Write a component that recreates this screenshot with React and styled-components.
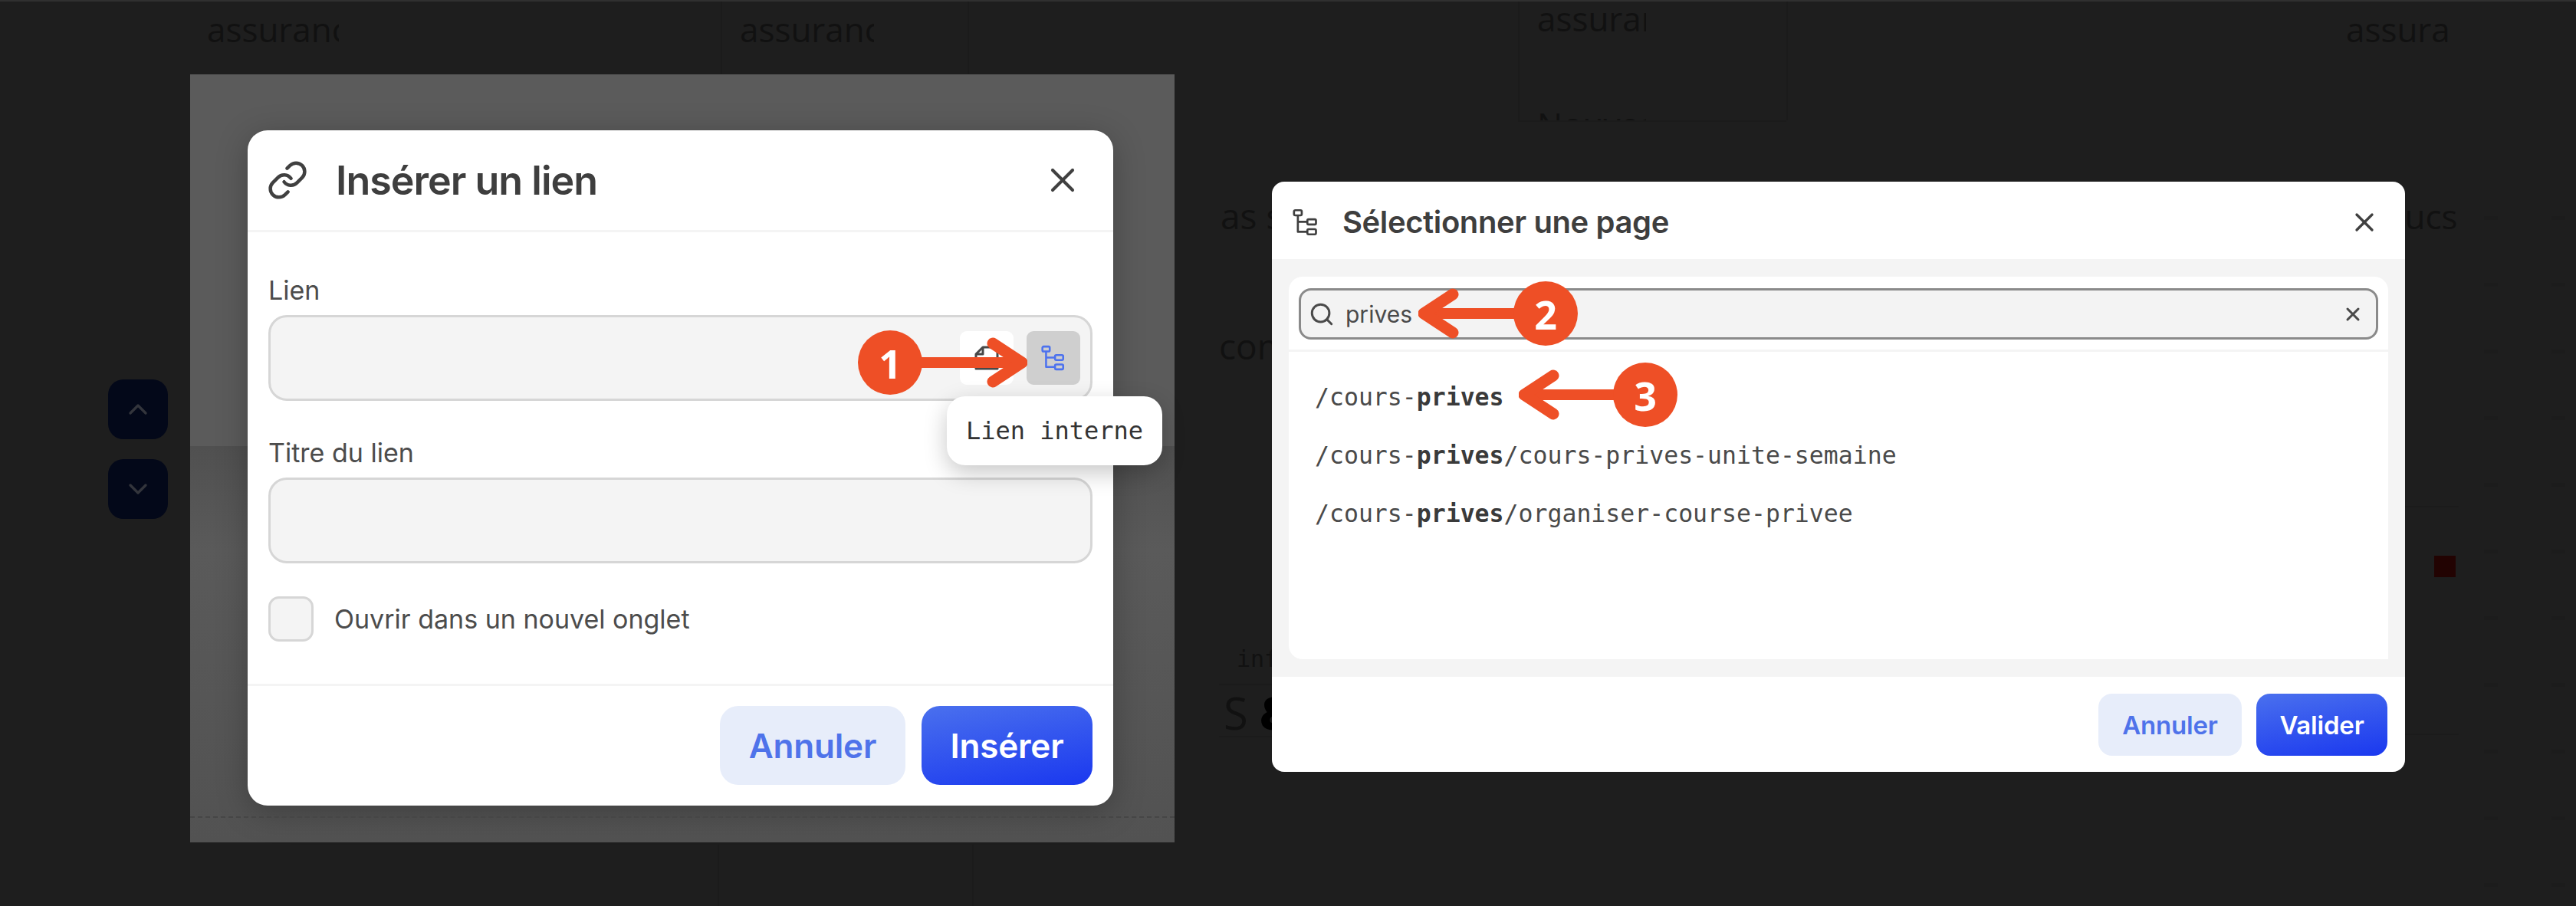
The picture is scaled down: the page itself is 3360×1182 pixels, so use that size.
import { Search, X, ChevronUp, ChevronDown, Link as LinkIcon } from 'lucide-react';
import styled, { createGlobalStyle } from 'styled-components';

const UI_FONT = `Inter, "Liberation Sans", sans-serif`;
const MONO_FONT = `"DejaVu Sans Mono", "Liberation Mono", monospace`;

const GlobalStyle = createGlobalStyle`
  html, body {
    margin: 0;
    padding: 0;
    background: #1e1e1e;
  }
  * { box-sizing: border-box; }
`;

const Stage = styled.div`
  position: relative;
  width: 3360px;
  height: 1182px;
  overflow: hidden;
  display: flex;
  align-items: flex-start;
  padding-left: 248px;
  background: #1e1e1e;
  border-top: 2px solid #303030;
  font-family: ${UI_FONT};
`;

/* what is left of the page behind the dimmed overlay */
const GhostText = styled.div`
  position: absolute;
  left: ${(p) => p.$x}px;
  top: ${(p) => p.$y}px;
  width: ${(p) => p.$w}px;
  height: ${(p) => p.$h || 70}px;
  overflow: hidden;
  color: #111;
  font: ${(p) => p.$size || 44}px/1.3 ${(p) => (p.$mono ? MONO_FONT : '"Open Sans", sans-serif')};
  white-space: nowrap;
  b { color: #000; font-weight: 800; }
`;

const GhostLine = styled.div`
  position: absolute;
  left: ${(p) => p.$x}px;
  top: ${(p) => p.$y}px;
  width: 2px;
  height: ${(p) => p.$h}px;
  background: #1b1b1b;
`;

const GhostRule = styled.div`
  position: absolute;
  left: ${(p) => p.$x}px;
  top: ${(p) => p.$y}px;
  width: ${(p) => p.$w}px;
  height: 2px;
  background: #1b1b1b;
`;

const GhostMarks = styled.div`
  position: absolute;
  left: ${(p) => p.$x}px;
  top: 280px;
  width: 18px;
  height: 902px;
  background: repeating-linear-gradient(#1c1c1c 0 5px, transparent 5px 87px);
`;

const GhostSquare = styled.div`
  position: absolute;
  left: 3175px;
  top: 723px;
  width: 28px;
  height: 28px;
  background: #220302;
`;

const ScrollButton = styled.div`
  position: absolute;
  left: 141px;
  top: ${(p) => p.$y}px;
  width: 78px;
  height: 78px;
  border-radius: 20px;
  background: #030819;
  color: #33353c;
  display: flex;
  align-items: center;
  justify-content: center;
`;

const Panel = styled.div`
  flex: none;
  width: 1284px;
  height: 1002px;
  margin-top: 95px;
  padding: 73px 0 0 75px;
  position: relative;
  background: linear-gradient(#5b5b5b 0 485px, #505050 485px, #5a5a5a 620px, #525252 100%);
`;

const DottedRule = styled.div`
  position: absolute;
  left: 0;
  right: 0;
  bottom: 32px;
  border-top: 2px dashed #464646;
`;

const LinkDialog = styled.section`
  position: relative;
  width: 1129px;
  height: 881px;
  display: flex;
  flex-direction: column;
  background: #fff;
  border-radius: 26px;
  box-shadow: 0 8px 40px rgba(0, 0, 0, 0.25);
`;

const LinkHeader = styled.header`
  height: 133px;
  flex: none;
  display: flex;
  align-items: center;
  gap: 36px;
  padding: 0 40px 0 25px;
  border-bottom: 3px solid #f4f4f4;
  color: #404040;
`;

const LinkTitle = styled.h2`
  flex: 1;
  margin: 0;
  font-size: 52px;
  font-weight: 600;
  letter-spacing: -1px;
  color: #3e3e3e;
`;

const LinkBody = styled.div`
  flex: 1;
  display: flex;
  flex-direction: column;
  padding: 56px 27px 0;
`;

const FieldLabel = styled.label`
  display: block;
  height: 52px;
  font-size: 34px;
  line-height: 40px;
  color: #4c4c4c;
`;

const FieldBox = styled.div`
  height: 112px;
  margin-bottom: 48px;
  flex: none;
  display: flex;
  align-items: center;
  justify-content: flex-end;
  gap: 17px;
  padding: 0 13px 0 0;
  background: #f4f4f4;
  border: 3px solid #d6d6d6;
  border-radius: 24px;
`;

const FieldButton = styled.div`
  width: 70px;
  height: 70px;
  border-radius: 9px;
  display: flex;
  align-items: center;
  justify-content: center;
  background: ${(p) => (p.$active ? '#cfcfcf' : '#fff')};
  color: ${(p) => (p.$active ? '#4d72ee' : '#484848')};
`;

const CheckRow = styled.div`
  display: flex;
  align-items: center;
  gap: 27px;
  margin-top: -5px;
  font-size: 34px;
  color: #4c4c4c;
`;

const CheckBox = styled.div`
  width: 59px;
  height: 59px;
  background: #f4f4f4;
  border: 3px solid #d6d6d6;
  border-radius: 14px;
`;

const LinkFooter = styled.footer`
  height: 159px;
  flex: none;
  display: flex;
  align-items: flex-start;
  justify-content: flex-end;
  gap: 21px;
  padding: 26px 27px 0;
  border-top: 3px solid #f4f4f4;
`;

const ActionButton = styled.div`
  height: ${(p) => p.$h}px;
  width: ${(p) => p.$w}px;
  display: flex;
  align-items: center;
  justify-content: center;
  border-radius: ${(p) => (p.$h > 90 ? 24 : 18)}px;
  font-size: ${(p) => (p.$h > 90 ? 44 : 33)}px;
  font-weight: 600;
  letter-spacing: -0.2px;
  background: ${(p) => (p.$primary ? 'linear-gradient(170deg, #4a70ee, #1a38ef)' : '#e7edfa')};
  color: ${(p) => (p.$primary ? '#fff' : '#4f73ea')};
`;

const Tooltip = styled.div`
  position: absolute;
  left: 912px;
  top: 347px;
  width: 281px;
  height: 90px;
  display: flex;
  align-items: center;
  justify-content: center;
  background: #fff;
  border-radius: 24px;
  box-shadow: 0 10px 30px rgba(0, 0, 0, 0.22);
  font: 32px ${MONO_FONT};
  color: #333;
`;

const PageDialog = styled.section`
  position: relative;
  flex: none;
  width: 1478px;
  height: 770px;
  margin: 235px 0 0 127px;
  display: flex;
  flex-direction: column;
  background: #fff;
  border-radius: 16px;
  overflow: hidden;
`;

const PageHeader = styled.header`
  height: 101px;
  flex: none;
  display: flex;
  align-items: center;
  gap: 30px;
  padding: 4px 33px 0 26px;
  color: #404040;
`;

const PageTitle = styled.h2`
  flex: 1;
  margin: 0;
  font-size: 40px;
  font-weight: 600;
  letter-spacing: -0.4px;
  color: #3e3e3e;
`;

const PageBody = styled.div`
  flex: 1;
  padding: 23px 22px;
  background: #f4f4f4;
`;

const PagePanel = styled.div`
  height: 100%;
  background: #fff;
  border-radius: 18px 18px 0 18px;
`;

const SearchArea = styled.div`
  height: 98px;
  padding: 15px 13px 0;
  border-bottom: 3px solid #f4f4f4;
`;

const SearchBox = styled.div`
  height: 67px;
  display: flex;
  align-items: center;
  gap: 14px;
  padding: 0 16px 0 10px;
  background: #f3f3f3;
  border: 3px solid #8a8a8a;
  border-radius: 16px;
  font-size: 30px;
  color: #4a4a4a;
  span { flex: 1; }
`;

const ResultList = styled.ul`
  list-style: none;
  margin: 0;
  padding: 21px 0 0 34px;
`;

const ResultRow = styled.li`
  height: 76px;
  display: flex;
  align-items: center;
  font: 31.5px ${MONO_FONT};
  color: #4a4a4a;
  white-space: pre;
  b { font-weight: 700; color: #3a3a3a; }
`;

const PageFooter = styled.footer`
  height: 124px;
  flex: none;
  display: flex;
  align-items: flex-start;
  justify-content: flex-end;
  gap: 19px;
  padding: 22px 23px 0;
`;

const Marker = styled.div`
  position: absolute;
  left: ${(p) => p.$x - 42}px;
  top: ${(p) => p.$y - 42}px;
  width: 84px;
  height: 84px;
  border-radius: 50%;
  background: #ee4f26;
  color: #fff;
  display: flex;
  align-items: center;
  justify-content: center;
  font: 700 52px "Open Sans", sans-serif;
`;

const ArrowSvg = styled.svg`
  position: absolute;
  left: ${(p) => p.$x}px;
  top: ${(p) => p.$y - 34}px;
`;

function TreeIcon({ size = 34, color = 'currentColor', stroke = 2.4 }) {
  return (
    <svg width={size} height={size} viewBox="0 0 32 32" fill="none" stroke={color} strokeWidth={stroke} strokeLinejoin="round">
      <rect x="2.5" y="2" width="9" height="6" rx="1.5" />
      <rect x="18" y="12.5" width="10" height="6" rx="1.5" />
      <rect x="18" y="24" width="10" height="6" rx="1.5" />
      <path d="M7 8v19h11M7 15.5h11" />
    </svg>
  );
}

function FileIcon() {
  return (
    <svg width="34" height="34" viewBox="0 0 34 34" fill="none" stroke="currentColor" strokeWidth="3" strokeLinejoin="round">
      <path d="M3 12 12 3h19v28H3z" />
      <path d="M12 3v9H3" />
    </svg>
  );
}

function Arrow({ x, y, length, flip }) {
  const tip = flip ? 7 : length - 7;
  const back = flip ? 45 : length - 45;
  const tail = flip ? length : 0;
  return (
    <ArrowSvg $x={x} $y={y} width={length} height="68" viewBox={`0 0 ${length} 68`} fill="none" stroke="#ee4f26" strokeLinecap="round" strokeLinejoin="round">
      <path d={`M${tail} 34H${tip}`} strokeWidth="14" />
      <path d={`M${back} 9 ${tip} 34 ${back} 59`} strokeWidth="15" />
    </ArrowSvg>
  );
}

function App() {
  return (
    <Stage>
      <GlobalStyle />

      <GhostText $x={270} $y={8} $w={172}>assurance</GhostText>
      <GhostText $x={965} $y={8} $w={175}>assurance</GhostText>
      <GhostText $x={2005} $y={-6} $w={142}>assurance</GhostText>
      <GhostText $x={3060} $y={8} $w={135}>assurance</GhostText>
      <GhostText $x={2005} $y={132} $w={142} $h={24}>Nouveau</GhostText>
      <GhostText $x={1592} $y={250} $w={80} $size={46}>as se</GhostText>
      <GhostText $x={1590} $y={420} $w={80} $size={46}>com</GhostText>
      <GhostText $x={3110} $y={252} $w={96}>oucs</GhostText>
      <GhostText $x={1613} $y={838} $w={60} $size={30} $mono>inf</GhostText>
      <GhostText $x={1596} $y={890} $w={80} $h={80} $size={58}>S <b>&amp;</b></GhostText>
      <GhostLine $x={940} $y={0} $h={95} />
      <GhostLine $x={1262} $y={0} $h={95} />
      <GhostLine $x={1980} $y={0} $h={155} />
      <GhostLine $x={2330} $y={0} $h={155} />
      <GhostLine $x={936} $y={1100} $h={82} />
      <GhostLine $x={1268} $y={1100} $h={82} />
      <GhostRule $x={1980} $y={155} $w={350} />
      <GhostRule $x={1590} $y={890} $w={80} />
      <GhostRule $x={1590} $y={958} $w={80} />
      <GhostRule $x={3137} $y={658} $w={70} />
      <GhostRule $x={3137} $y={955} $w={70} />
      <GhostMarks $x={3240} />
      <GhostMarks $x={3328} />
      <GhostSquare />

      <ScrollButton $y={493}><ChevronUp size={40} strokeWidth={2} /></ScrollButton>
      <ScrollButton $y={597}><ChevronDown size={40} strokeWidth={2} /></ScrollButton>

      <Panel>
        <LinkDialog>
          <LinkHeader>
            <LinkIcon size={54} strokeWidth={2} />
            <LinkTitle>Insérer un lien</LinkTitle>
            <X size={52} strokeWidth={1.9} />
          </LinkHeader>
          <LinkBody>
            <FieldLabel>Lien</FieldLabel>
            <FieldBox>
              <FieldButton><FileIcon /></FieldButton>
              <FieldButton $active><TreeIcon /></FieldButton>
            </FieldBox>
            <FieldLabel>Titre du lien</FieldLabel>
            <FieldBox />
            <CheckRow>
              <CheckBox />
              Ouvrir dans un nouvel onglet
            </CheckRow>
          </LinkBody>
          <LinkFooter>
            <ActionButton $h={103} $w={242}>Annuler</ActionButton>
            <ActionButton $h={103} $w={223} $primary>Insérer</ActionButton>
          </LinkFooter>
          <Tooltip>Lien interne</Tooltip>
        </LinkDialog>
        <DottedRule />
      </Panel>

      <PageDialog>
        <PageHeader>
          <TreeIcon size={36} />
          <PageTitle>Sélectionner une page</PageTitle>
          <X size={40} strokeWidth={2} />
        </PageHeader>
        <PageBody>
          <PagePanel>
            <SearchArea>
              <SearchBox>
                <Search size={34} strokeWidth={2.1} />
                <span>prives</span>
                <X size={28} strokeWidth={2.6} />
              </SearchBox>
            </SearchArea>
            <ResultList>
              <ResultRow>/cours-<b>prives</b></ResultRow>
              <ResultRow>/cours-<b>prives</b>/cours-prives-unite-semaine</ResultRow>
              <ResultRow>/cours-<b>prives</b>/organiser-course-privee</ResultRow>
            </ResultList>
          </PagePanel>
        </PageBody>
        <PageFooter>
          <ActionButton $h={81} $w={187}>Annuler</ActionButton>
          <ActionButton $h={81} $w={171} $primary>Valider</ActionButton>
        </PageFooter>
      </PageDialog>

      <Arrow x={1198} y={471} length={142} />
      <Marker $x={1161} $y={471}>1</Marker>
      <Arrow x={1850} y={407} length={130} flip />
      <Marker $x={2016} $y={407}>2</Marker>
      <Arrow x={1981} y={513} length={130} flip />
      <Marker $x={2146} $y={513}>3</Marker>
    </Stage>
  );
}

export default App;
